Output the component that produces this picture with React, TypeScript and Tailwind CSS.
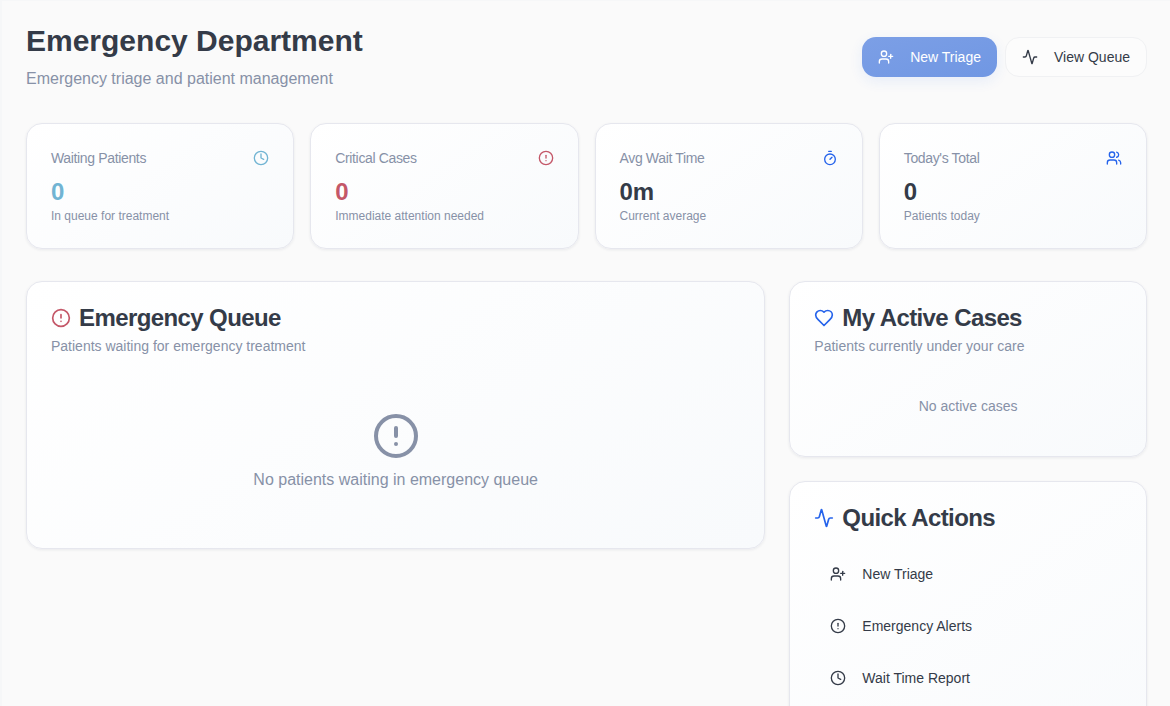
import { Activity, CircleAlert, Clock, Timer, UserPlus, Users } from "lucide-react";

const card =
  "rounded-2xl border border-[#e6e7ee] bg-[linear-gradient(145deg,#ffffff,#f8fafc)] shadow-[0_1px_3px_rgba(30,41,59,0.08)]";

const heading = "flex items-center gap-2 text-2xl leading-6 font-bold tracking-tight";

const stats = [
  { title: "Waiting Patients", value: "0", note: "In queue for treatment", icon: Clock, tint: "text-[#71b4d3]" },
  { title: "Critical Cases", value: "0", note: "Immediate attention needed", icon: CircleAlert, tint: "text-[#c45768]" },
  { title: "Avg Wait Time", value: "0m", note: "Current average", icon: Timer, tint: "" },
  { title: "Today's Total", value: "0", note: "Patients today", icon: Users, tint: "" },
];

const actions = [
  { label: "New Triage", icon: UserPlus },
  { label: "Emergency Alerts", icon: CircleAlert },
  { label: "Wait Time Report", icon: Clock },
];

function HeartIcon() {
  return (
    <svg
      viewBox="0 0 24 24"
      fill="none"
      stroke="currentColor"
      strokeWidth="2"
      strokeLinecap="round"
      strokeLinejoin="round"
      className="size-5 text-[#2563eb]"
    >
      <path d="M19 14c1.49-1.46 3-3.21 3-5.5A5.5 5.5 0 0 0 16.5 3c-1.76 0-3 .5-4.5 2-1.5-1.5-2.74-2-4.5-2A5.5 5.5 0 0 0 2 8.5c0 2.3 1.5 4.05 3 5.5l7 7Z" />
    </svg>
  );
}

export default function App() {
  return (
    <div className="h-[706px] overflow-hidden border-t border-l-2 border-[#f6f7f8] bg-[#fafafa] pt-[21px] pr-[23px] pl-6 font-['Liberation_Sans',Arial,sans-serif] text-[#343b48]">
      <header className="flex items-center justify-between pt-px">
        <div>
          <h1 className="text-3xl leading-9 font-bold">Emergency Department</h1>
          <p className="mt-2 text-base leading-6 text-[#8791a7]">Emergency triage and patient management</p>
        </div>
        <div className="flex gap-2 text-sm">
          <button className="flex h-10 items-center gap-4 rounded-[14px] bg-linear-to-br from-[#7c9fe6] to-[#7097e3] px-4 text-white shadow-[0_4px_14px_rgba(37,99,235,0.09)]">
            <UserPlus size={16} />
            New Triage
          </button>
          <button className="flex h-10 items-center gap-4 rounded-[14px] border border-[#f0f1f3] bg-[#fcfcfc] px-4">
            <Activity size={16} />
            View Queue
          </button>
        </div>
      </header>

      <section className="mt-8 grid grid-cols-4 gap-4">
        {stats.map(({ title, value, note, icon: Icon, tint }) => (
          <div key={title} className={`${card} h-[126px] p-6`}>
            <div className="flex items-center justify-between">
              <span className="text-sm leading-5 tracking-tight text-[#8791a7]">{title}</span>
              <Icon size={16} className={tint || "text-[#2563eb]"} />
            </div>
            <div className={`mt-2 text-2xl leading-8 font-bold ${tint}`}>{value}</div>
            <p className="text-xs leading-4 text-[#8791a7]">{note}</p>
          </div>
        ))}
      </section>

      <main className="mt-8 grid grid-cols-[739.33px_1fr] items-start gap-6">
        <section className={`${card} h-[268px] p-6`}>
          <h2 className={heading}>
            <CircleAlert size={20} className="text-[#c45768]" />
            Emergency Queue
          </h2>
          <p className="mt-1.5 text-sm leading-5 text-[#8791a7]">Patients waiting for emergency treatment</p>
          <div className="mt-14 flex flex-col items-center text-[#8791a7]">
            <CircleAlert size={48} />
            <p className="mt-2 text-base leading-6">No patients waiting in emergency queue</p>
          </div>
        </section>
        <aside className="flex flex-col gap-6">
          <section className={`${card} h-44 p-6`}>
            <h2 className={heading}>
              <HeartIcon />
              My Active Cases
            </h2>
            <p className="mt-1.5 text-sm leading-5 text-[#8791a7]">Patients currently under your care</p>
            <p className="mt-10 text-center text-sm leading-5 text-[#8791a7]">No active cases</p>
          </section>
          <section className={`${card} h-[305px] p-6`}>
            <h2 className={heading}>
              <Activity size={20} className="text-[#2563eb]" />
              Quick Actions
            </h2>
            <div className="mt-6 flex flex-col gap-3">
              {actions.map(({ label, icon: Icon }) => (
                <button key={label} className="flex h-10 items-center gap-4 px-4 text-sm">
                  <Icon size={16} />
                  {label}
                </button>
              ))}
            </div>
          </section>
        </aside>
      </main>
    </div>
  );
}
